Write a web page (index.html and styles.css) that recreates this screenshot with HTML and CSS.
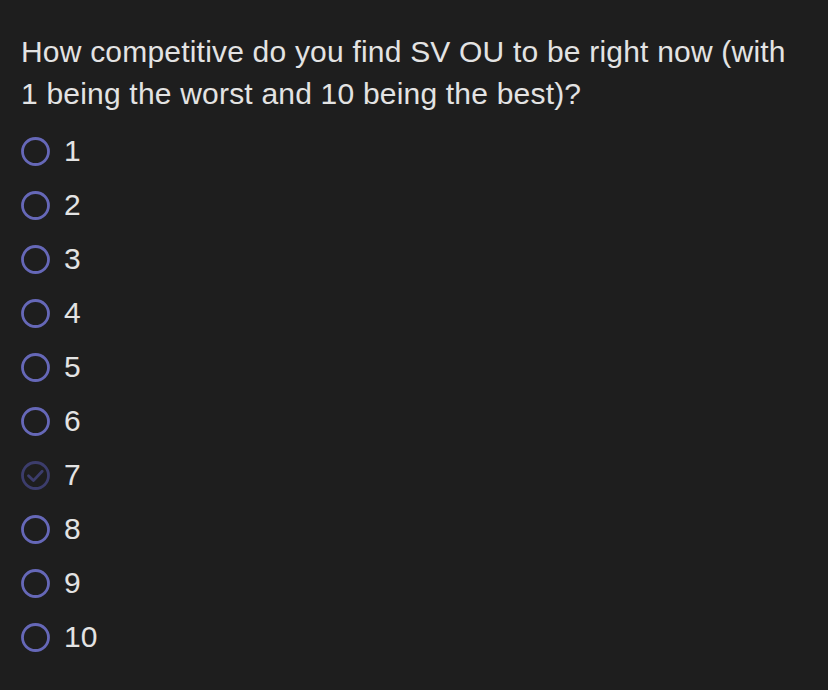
FILE: index.html
```html
<!DOCTYPE html>
<html lang="en">
<head>
  <meta charset="UTF-8" />
  <meta name="viewport" content="width=device-width, initial-scale=1.0"/>
  <title>Poll</title>
  <link rel="stylesheet" href="styles.css">
</head>
<body>
  <div class="poll">
    <p class="question">How competitive do you find SV OU to be right now (with 1 being the worst and 10 being the best)?</p>

    <ul class="options">
      <li class="option">
        <svg class="radio" viewBox="0 0 29 29"><circle cx="14.5" cy="14.5" r="13"/></svg>
        <span class="label">1</span>
      </li>
      <li class="option">
        <svg class="radio" viewBox="0 0 29 29"><circle cx="14.5" cy="14.5" r="13"/></svg>
        <span class="label">2</span>
      </li>
      <li class="option">
        <svg class="radio" viewBox="0 0 29 29"><circle cx="14.5" cy="14.5" r="13"/></svg>
        <span class="label">3</span>
      </li>
      <li class="option">
        <svg class="radio" viewBox="0 0 29 29"><circle cx="14.5" cy="14.5" r="13"/></svg>
        <span class="label">4</span>
      </li>
      <li class="option">
        <svg class="radio" viewBox="0 0 29 29"><circle cx="14.5" cy="14.5" r="13"/></svg>
        <span class="label">5</span>
      </li>
      <li class="option">
        <svg class="radio" viewBox="0 0 29 29"><circle cx="14.5" cy="14.5" r="13"/></svg>
        <span class="label">6</span>
      </li>
      <li class="option selected">
        <svg class="radio" viewBox="0 0 29 29">
          <circle cx="14.5" cy="14.5" r="13"/>
          <path d="M7.5 14.8 L12.4 19.6 L21.2 10.2"/>
        </svg>
        <span class="label">7</span>
      </li>
      <li class="option">
        <svg class="radio" viewBox="0 0 29 29"><circle cx="14.5" cy="14.5" r="13"/></svg>
        <span class="label">8</span>
      </li>
      <li class="option">
        <svg class="radio" viewBox="0 0 29 29"><circle cx="14.5" cy="14.5" r="13"/></svg>
        <span class="label">9</span>
      </li>
      <li class="option">
        <svg class="radio" viewBox="0 0 29 29"><circle cx="14.5" cy="14.5" r="13"/></svg>
        <span class="label">10</span>
      </li>
    </ul>
  </div>
</body>
</html>
```

FILE: styles.css
```css
html, body {
  margin: 0;
  background-color: #1e1e1e;
}

body {
  font-family: 'Liberation Sans', Arial, Helvetica, sans-serif;
  color: #e3e3e3;
}

.poll {
  padding: 31px 21px 0 21px;
}

.question {
  margin: 0;
  font-size: 30px;
  line-height: 42px;
  letter-spacing: 0.2px;
}

.options {
  list-style: none;
  margin: 9px 0 0 0;
  padding: 0;
}

.option {
  display: flex;
  align-items: center;
  gap: 14px;
  height: 54px;
  font-size: 30px;
}

.radio {
  width: 29px;
  height: 29px;
  flex: none;
  fill: none;
  stroke: #6668b8;
  stroke-width: 2.8;
}

.option.selected .radio {
  stroke: #3c3d6c;
}

.option.selected .radio path {
  stroke-width: 2.8;
  stroke-linecap: round;
  stroke-linejoin: round;
}

.label {
  line-height: 54px;
}
```
